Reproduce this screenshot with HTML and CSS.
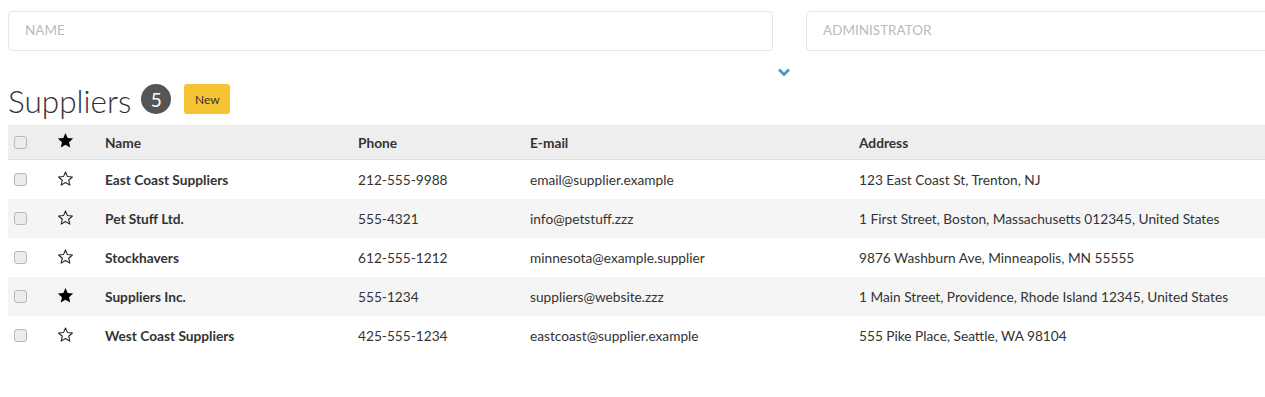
FILE: index.html
```html
<!DOCTYPE html>
<html lang="en">
<head>
    <meta charset="UTF-8">
    <title>Suppliers</title>
    <link rel="stylesheet" href="styles.css">
</head>
<body>
    <div class="page">
        <!-- Filters -->
        <div class="filters">
            <div class="filter">Name</div>
            <div class="filter">Administrator</div>
        </div>
        <div class="toggle">
            <svg width="14" height="10" viewBox="0 0 14 10"><path d="M1 2.5 L3 0.5 L7 4.5 L11 0.5 L13 2.5 L7 8.5 Z" fill="#4a9ac4"/></svg>
        </div>

        <!-- Title -->
        <div class="title-row">
            <h1>Suppliers</h1>
            <span class="count">5</span>
            <button class="btn-new">New</button>
        </div>

        <!-- Table -->
        <table class="grid">
            <colgroup>
                <col style="width:37px">
                <col style="width:52px">
                <col style="width:253px">
                <col style="width:172px">
                <col style="width:329px">
                <col>
            </colgroup>
            <thead>
                <tr>
                    <th class="cb-cell"><span class="cb"></span></th>
                    <th class="star-cell"><svg class="star" viewBox="0 0 24 24"><path class="full" d="M12 1.5l3.1 7.1 7.7.7-5.8 5.1 1.7 7.6L12 18l-6.7 4 1.7-7.6-5.8-5.1 7.7-.7z"/></svg></th>
                    <th>Name</th>
                    <th>Phone</th>
                    <th>E-mail</th>
                    <th>Address</th>
                </tr>
            </thead>
            <tbody>
                <tr>
                    <td class="cb-cell"><span class="cb"></span></td>
                    <td class="star-cell"><svg class="star" viewBox="0 0 24 24"><path class="empty" d="M12 2.8l2.8 6.5 7 .6-5.3 4.6 1.6 6.9L12 17.7l-6.1 3.7 1.6-6.9-5.3-4.6 7-.6z"/></svg></td>
                    <td class="name">East Coast Suppliers</td>
                    <td>212-555-9988</td>
                    <td>email@supplier.example</td>
                    <td>123 East Coast St, Trenton, NJ</td>
                </tr>
                <tr>
                    <td class="cb-cell"><span class="cb"></span></td>
                    <td class="star-cell"><svg class="star" viewBox="0 0 24 24"><path class="empty" d="M12 2.8l2.8 6.5 7 .6-5.3 4.6 1.6 6.9L12 17.7l-6.1 3.7 1.6-6.9-5.3-4.6 7-.6z"/></svg></td>
                    <td class="name">Pet Stuff Ltd.</td>
                    <td>555-4321</td>
                    <td>info@petstuff.zzz</td>
                    <td>1 First Street, Boston, Massachusetts 012345, United States</td>
                </tr>
                <tr>
                    <td class="cb-cell"><span class="cb"></span></td>
                    <td class="star-cell"><svg class="star" viewBox="0 0 24 24"><path class="empty" d="M12 2.8l2.8 6.5 7 .6-5.3 4.6 1.6 6.9L12 17.7l-6.1 3.7 1.6-6.9-5.3-4.6 7-.6z"/></svg></td>
                    <td class="name">Stockhavers</td>
                    <td>612-555-1212</td>
                    <td>minnesota@example.supplier</td>
                    <td>9876 Washburn Ave, Minneapolis, MN 55555</td>
                </tr>
                <tr>
                    <td class="cb-cell"><span class="cb"></span></td>
                    <td class="star-cell"><svg class="star" viewBox="0 0 24 24"><path class="full" d="M12 1.5l3.1 7.1 7.7.7-5.8 5.1 1.7 7.6L12 18l-6.7 4 1.7-7.6-5.8-5.1 7.7-.7z"/></svg></td>
                    <td class="name">Suppliers Inc.</td>
                    <td>555-1234</td>
                    <td>suppliers@website.zzz</td>
                    <td>1 Main Street, Providence, Rhode Island 12345, United States</td>
                </tr>
                <tr>
                    <td class="cb-cell"><span class="cb"></span></td>
                    <td class="star-cell"><svg class="star" viewBox="0 0 24 24"><path class="empty" d="M12 2.8l2.8 6.5 7 .6-5.3 4.6 1.6 6.9L12 17.7l-6.1 3.7 1.6-6.9-5.3-4.6 7-.6z"/></svg></td>
                    <td class="name">West Coast Suppliers</td>
                    <td>425-555-1234</td>
                    <td>eastcoast@supplier.example</td>
                    <td>555 Pike Place, Seattle, WA 98104</td>
                </tr>
            </tbody>
        </table>
    </div>
</body>
</html>
```

FILE: styles.css
```css
html, body {
    margin: 0;
    padding: 0;
    overflow: hidden;
    background: #fff;
}
body {
    font-family: Lato, "Liberation Sans", Arial, sans-serif;
    font-size: 13.7px;
    color: #333;
}
.page {
    width: 1563px;
    padding: 11px 8px 0 8px;
}
.filters {
    display: flex;
    gap: 33px;
}
.filter {
    flex: 1;
    height: 38px;
    line-height: 37px;
    border: 1px solid #e6e6e6;
    border-radius: 4px;
    padding-left: 16px;
    text-transform: uppercase;
    color: #bbb;
    font-size: 13.5px;
}
.toggle {
    display: flex;
    justify-content: center;
    padding: 17px 12px 0 0;
    height: 16px;
}
.title-row {
    display: flex;
    align-items: flex-start;
    height: 41px;
}
h1 {
    margin: -1px 0 0 0;
    font-size: 31.5px;
    line-height: 36px;
    font-weight: 300;
    color: #333;
}
.count {
    width: 30px;
    height: 30px;
    border-radius: 50%;
    background: #555;
    color: #fff;
    font-size: 19px;
    display: flex;
    align-items: center;
    justify-content: center;
    margin-left: 10px;
}
.btn-new {
    margin-left: 13px;
    width: 46px;
    height: 30px;
    padding: 0;
    border: none;
    border-radius: 3px;
    background: #f6c333;
    color: #333;
    font-family: inherit;
    font-size: 12px;
}
.grid {
    width: 100%;
    border-collapse: collapse;
    table-layout: fixed;
}
.grid th, .grid td {
    text-align: left;
    padding: 0 8px;
    white-space: nowrap;
}
.grid th {
    height: 34px;
    background: #eee;
    border-bottom: 1px solid #ddd;
    font-weight: 700;
}
.grid td {
    height: 39px;
}
.grid tbody tr:nth-child(even) td {
    background: #f5f5f5;
}
.grid .name {
    font-weight: 700;
}
.grid .cb-cell {
    padding-left: 6px;
}
.cb {
    display: block;
    width: 11px;
    height: 11px;
    border: 1px solid #b8b8b8;
    border-radius: 3px;
    background: #ececec;
}
.grid .star-cell {
    padding-left: 12px;
}
.star {
    display: block;
    width: 17px;
    height: 17px;
    margin-top: -3px;
}
.star .full {
    fill: #000;
}
.star .empty {
    fill: none;
    stroke: #222;
    stroke-width: 1.5;
    stroke-linejoin: round;
}
```
